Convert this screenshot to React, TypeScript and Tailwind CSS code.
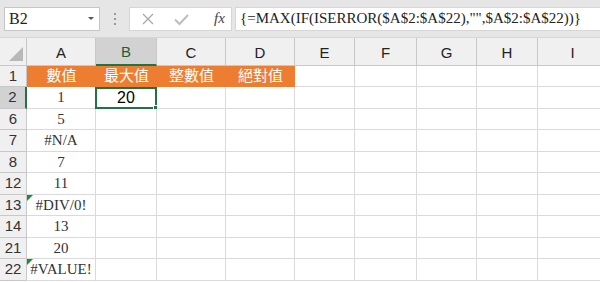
import React from "react";

const serif = { fontFamily: '"Liberation Serif", "Noto Sans CJK TC", serif' };

const cols = [
  { id: "A", w: "w-[69px]" },
  { id: "B", w: "w-[61px]" },
  { id: "C", w: "w-[69px]" },
  { id: "D", w: "w-[69px]" },
  { id: "E", w: "w-[60px]" },
  { id: "F", w: "w-[62px]" },
  { id: "G", w: "w-[60px]" },
  { id: "H", w: "w-[61px]" },
  { id: "I", w: "w-[70px]" },
];

const rows = [
  { n: "1", h: "h-[21px]", a: "數值" },
  { n: "2", h: "h-[22px]", a: "1" },
  { n: "6", h: "h-[21px]", a: "5" },
  { n: "7", h: "h-[22px]", a: "#N/A" },
  { n: "8", h: "h-[21px]", a: "7" },
  { n: "12", h: "h-[22px]", a: "11" },
  { n: "13", h: "h-[21px]", a: "#DIV/0!", err: true },
  { n: "14", h: "h-[22px]", a: "13" },
  { n: "21", h: "h-[21px]", a: "20" },
  { n: "22", h: "h-[22px]", a: "#VALUE!", err: true },
];

const headers = ["數值", "最大值", "整數值", "絕對值"];

function FormulaBar() {
  return (
    <div className="h-[38px] bg-[#e6e6e6] flex items-center pl-1 border-b border-[#d6d6d6]">
      <div className="w-[96px] h-[24px] bg-white border border-[#c6c6c6] flex items-center justify-between pl-[4px] pr-[5px]">
        <span className="text-[16px] text-[#222]" style={serif}>B2</span>
        <span className="w-0 h-0 border-l-[3px] border-r-[3px] border-t-[3px] border-l-transparent border-r-transparent border-t-[#555]" />
      </div>
      <div className="w-[29px] flex flex-col items-center gap-[3px]">
        <span className="w-[2px] h-[2px] bg-[#999]" />
        <span className="w-[2px] h-[2px] bg-[#999]" />
        <span className="w-[2px] h-[2px] bg-[#999]" />
      </div>
      <div className="w-[103px] h-[24px] bg-white border border-[#d6d6d6] flex items-center">
        <svg width="34" height="24" viewBox="0 0 34 24" className="shrink-0">
          <path d="M13 7 L23 17 M23 7 L13 17" stroke="#a6a6a6" strokeWidth="1.2" fill="none" />
        </svg>
        <svg width="34" height="24" viewBox="0 0 34 24" className="shrink-0">
          <path d="M11 12.5 L15.5 17 L24 8" stroke="#bdbdbd" strokeWidth="2" fill="none" />
        </svg>
        <span className="w-[34px] text-center text-[15px] italic text-[#444] pl-[10px]" style={serif}>
          fx
        </span>
      </div>
      <div className="flex-1 h-[24px] ml-[3px] bg-white border border-[#d6d6d6] border-r-0 flex items-center pl-[4px] overflow-hidden whitespace-nowrap">
        <span className="text-[15px] text-[#222]" style={serif}>
          {'{=MAX(IF(ISERROR($A$2:$A$22),"",$A$2:$A$22))}'}
        </span>
      </div>
    </div>
  );
}

function ColumnHeaders() {
  return (
    <div className="flex h-[28px] bg-[#f0f0f0]">
      <div className="w-[27px] shrink-0 border-r border-b border-[#c8c8c8] relative">
        <svg width="16" height="16" viewBox="0 0 16 16" className="absolute right-[2px] bottom-[3px]">
          <path d="M15 1 L15 15 L1 15 Z" fill="#b8b8b8" />
        </svg>
      </div>
      {cols.map((c) =>
        c.id === "B" ? (
          <div
            key={c.id}
            className={`${c.w} shrink-0 bg-[#d2d2d2] border-r border-[#c8c8c8] border-b-2 border-b-[#217346] flex items-center justify-center pt-[3px] text-[15px] text-[#1e5e3a]`}
          >
            {c.id}
          </div>
        ) : (
          <div
            key={c.id}
            className={`${c.w} shrink-0 border-r border-b border-[#c8c8c8] flex items-center justify-center pt-[3px] text-[15px] text-[#222]`}
          >
            {c.id}
          </div>
        )
      )}
    </div>
  );
}

function Row({ r, i }: { r: (typeof rows)[number]; i: number }) {
  const selected = r.n === "2";
  return (
    <div className={`flex ${r.h}`}>
      <div
        className={`w-[27px] shrink-0 flex items-center justify-center text-[15px] text-[#333] border-b border-[#c8c8c8] ${
          selected ? "bg-[#d2d2d2] border-r-2 border-r-[#217346]" : "bg-[#f0f0f0] border-r border-r-[#c8c8c8]"
        }`}
      >
        {r.n}
      </div>
      {cols.map((c, ci) => {
        if (i === 0 && ci < 4) {
          return (
            <div
              key={c.id}
              className={`${c.w} shrink-0 bg-[#ed7d31] flex items-center justify-center text-white text-[15px]`}
              style={serif}
            >
              {headers[ci]}
            </div>
          );
        }
        if (selected && c.id === "B") {
          return (
            <div
              key={c.id}
              className="shrink-0 relative -ml-[1px] w-[62px] border-2 border-[#217346] flex items-center justify-center text-[16px] text-black bg-white"
            >
              20
              <span className="absolute -right-[4px] -bottom-[4px] w-[6px] h-[6px] bg-[#217346] border border-white" />
            </div>
          );
        }
        return (
          <div
            key={c.id}
            className={`${c.w} shrink-0 relative bg-white border-r border-b border-[#dadada] flex items-center justify-center text-[15px] text-[#333]`}
            style={ci === 0 ? serif : undefined}
          >
            {ci === 0 ? r.a : null}
            {ci === 0 && r.err ? (
              <svg width="6" height="6" viewBox="0 0 6 6" className="absolute left-0 top-0">
                <path d="M0 0 L6 0 L0 6 Z" fill="#1e8a3c" />
              </svg>
            ) : null}
          </div>
        );
      })}
    </div>
  );
}

export default function App() {
  return (
    <div className="w-[600px] h-[282px] overflow-hidden bg-white" style={{ fontFamily: '"Liberation Sans", sans-serif' }}>
      <FormulaBar />
      <ColumnHeaders />
      {rows.map((r, i) => (
        <Row key={r.n} r={r} i={i} />
      ))}
    </div>
  );
}
